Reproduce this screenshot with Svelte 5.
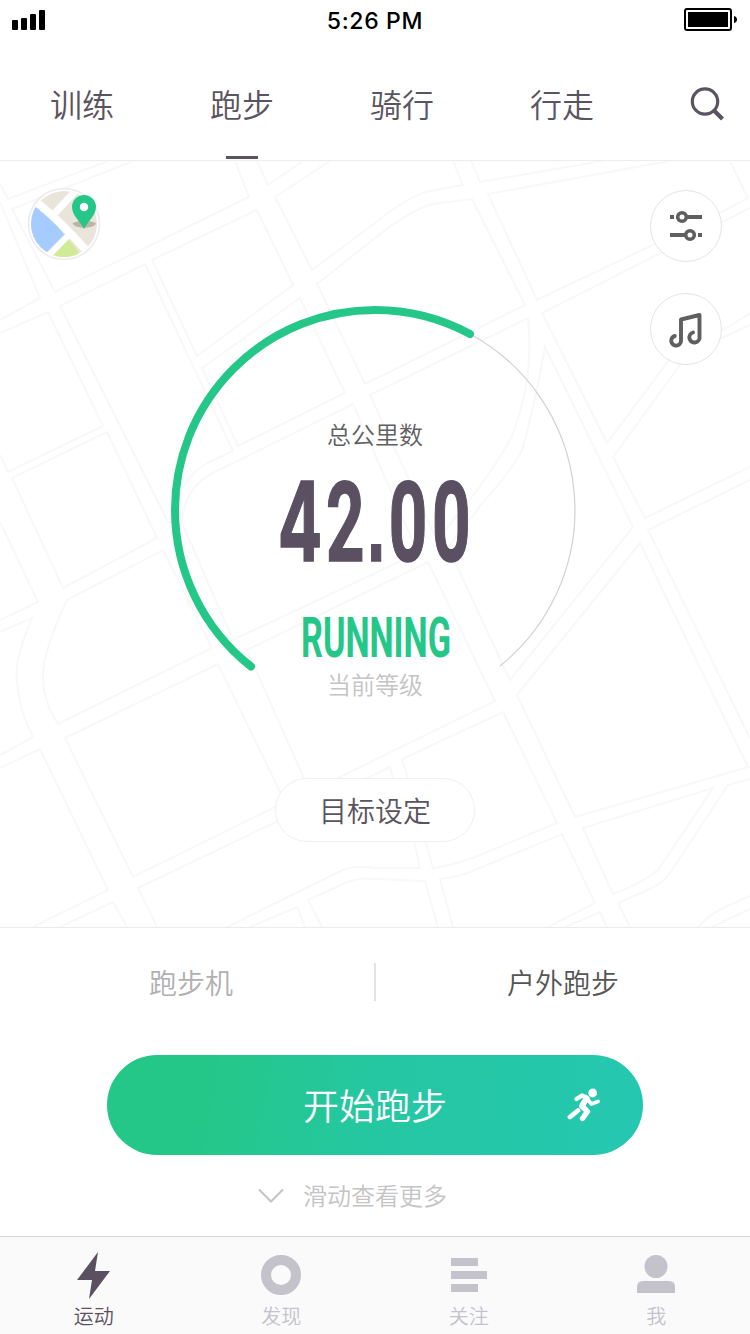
<script>
  const tabs = ['训练', '跑步', '骑行', '行走'];
  const activeTab = '跑步';

  // Outlines of the city blocks, in screen units
  const blocks = [
    'M0 184L8 199L108 161',
    'M133 161L12 209L55 292L249 197L235 161',
    'M0 202L40 298L0 320',
    'M0 333L48 312L103 426L8 472L0 455',
    'M60 306L145 264L233 451L207 463Q178 480 172 522L168 522Z',
    'M152 260L257 210L293 285L197 356Z',
    'M202 368L300 298L345 393L238 446Z',
    'M257 161L268 185L303 161',
    'M330 161L275 197L312 270L375 223Q408 196 430 191L463 185L453 161',
    'M317 284L375 238Q412 209 433 204L472 199L525 305L365 384Z',
    'M471 161L480 182L602 161',
    'M670 161L488 194L537 300L722 212L748 198L730 161',
    'M750 208L542 313L607 443L667 363Q684 344 723 330L750 313',
    'M750 325L700 348Q688 354 680 365L613 457L645 518L750 467',
    'M750 480L648 530L750 738',
    'M633 527L510 680L448 547L485 500Q512 470 522 450Q536 400 545 347Z',
    'M370 395L528 318Q534 378 514 430Q510 445 475 493L437 540Z',
    'M353 404L213 473Q184 488 182 523L233 640L418 553Z',
    'M247 650L428 562L495 701L340 777L310 792Z',
    'M163 550L212 648L58 724Q36 690 46 655Q52 632 67 600Z',
    'M12 478L107 432L157 538L63 588Z',
    'M0 522L38 602L0 620',
    'M0 632L32 618Q14 660 17 680Q18 708 33 737L0 755',
    'M0 768L40 749L108 890L33 927',
    'M65 738L218 664L285 802L133 877Z',
    'M60 927L113 902L127 927',
    'M157 927L138 888L280 820L405 800L420 868L375 868Q356 865 343 870L227 927',
    'M250 927L297 907L305 927',
    'M322 927L308 900L345 883Q360 877 375 879L425 881L438 927',
    'M453 927L440 879Q460 877 475 870L562 834L595 903L548 927',
    'M565 927L600 912L607 927',
    'M630 927L618 903L650 889Q663 883 670 873L728 785L750 779',
    'M698 927Q710 914 725 907L750 896',
    'M712 927L750 909',
    'M583 828L713 788L658 870Q640 884 613 894Z',
    'M575 817L517 695L640 543L748 767Z',
    'M503 712L557 823L475 857Q450 866 433 868L402 759Z',
    'M365 779L390 767L396 790'
  ];
</script>

<div class="screen">
  <header class="status">
    <svg class="signal" width="34" height="21" viewBox="0 0 34 21">
      <rect x="0" y="10" width="6" height="10" rx="1" />
      <rect x="9" y="8" width="6" height="12" rx="1" />
      <rect x="18" y="4" width="6" height="16" rx="1" />
      <rect x="27" y="0" width="6" height="20" rx="1" />
    </svg>
    <span class="time">5:26 PM</span>
    <svg class="battery" width="54" height="24" viewBox="0 0 54 24">
      <rect x="1" y="1" width="46" height="21" rx="2" fill="none" stroke="#000" stroke-width="2" />
      <rect x="4" y="4" width="40" height="15" />
      <path d="M50 8Q53 9 53 11.500Q53 14 50 15Z" />
    </svg>
  </header>

  <nav class="tabs">
    {#each tabs as tab}
      <div class="tab" class:active={tab === activeTab}>{tab}</div>
    {/each}
    <svg class="search" width="36" height="36" viewBox="0 0 36 36" fill="none" stroke="#5a5360">
      <circle cx="16" cy="15.500" r="12.700" stroke-width="3.200" />
      <path d="M24.500 24L33.500 33" stroke-width="4.200" />
    </svg>
  </nav>

  <main class="stage">
    <svg class="map" viewBox="0 161 750 766" width="750" height="766">
      <g fill="none" stroke="#f8f8f8" stroke-width="2">
        {#each blocks as d}<path {d} />{/each}
      </g>
    </svg>

    <div class="tools">
      <svg class="mapbtn" width="74" height="74" viewBox="27 187 74 74">
        <defs><clipPath id="disc"><circle cx="64" cy="224" r="33" /></clipPath></defs>
        <circle cx="64" cy="224" r="35.500" fill="#fff" stroke="#ebebeb" stroke-width="1.500" />
        <g clip-path="url(#disc)">
          <path d="M30 188H100V260H30Z" fill="#e9e5da" />
          <path d="M26 200L36 207Q52 218 64 234.500L46 253L22 262Z" fill="#a6ccff" />
          <path d="M68.500 239L80 254L72 262H46L52 256Z" fill="#d0eb96" />
          <path d="M32 199Q58 218 92 257" stroke="#fff" stroke-width="8" fill="none" />
          <path d="M80 186L55 213" stroke="#fff" stroke-width="7" />
          <path d="M70 234L46 258" stroke="#fff" stroke-width="6" />
        </g>
        <path d="M72.500 223Q84 218 96 223Q96 227 84 228Q73 227 72.500 223Z" fill="#bcb4a5" />
        <path d="M84 229C81 222 72 216 72 207A12 12 0 0 1 96 207C96 216 87 222 84 229Z" fill="#25c789" />
        <circle cx="84" cy="207" r="4.200" fill="#fff" />
      </svg>
      <div class="side">
        <div class="round">
          <svg width="36" height="36" viewBox="0 0 36 36" fill="none" stroke="#5f5f5f">
            <path d="M2 9H6M17 9H34M2 27H18M30 27H34" stroke-width="4" />
            <circle cx="14" cy="9" r="4.300" stroke-width="3.600" />
            <circle cx="22" cy="27" r="4.300" stroke-width="3.600" />
          </svg>
        </div>
        <div class="round">
          <svg width="36" height="38" viewBox="0 0 36 38" fill="none" stroke="#5f5f5f" stroke-width="3.900" stroke-linecap="round" stroke-linejoin="round">
            <path d="M6.800 26A4.900 4.900 0 1 0 13 31V9.500L31.500 5V26.500A5.100 5.100 0 1 1 25 22.500" />
          </svg>
        </div>
      </div>
    </div>

    <section class="gauge">
      <svg class="dial" viewBox="165 300 420 380" width="420" height="380" fill="none">
        <path d="M470 334A200 200 0 0 1 500 666" stroke="#d2d2d2" stroke-width="1.200" />
        <path d="M251 666.500A200 200 0 0 1 175 510A200 200 0 0 1 375 310A200 200 0 0 1 470 334" stroke="#25c789" stroke-width="8" stroke-linecap="round" />
      </svg>
      <div class="label">总公里数</div>
      <svg class="figure" viewBox="275 455 200 137" width="200" height="137">
        <text transform="translate(0 560.5) scale(.6 1)" y="0"><tspan class="four" x="500">4</tspan><tspan x="575.500">2</tspan><tspan class="dot" x="627">.</tspan><tspan x="680">0</tspan><tspan x="752">0</tspan></text>
      </svg>
      <svg class="level" viewBox="295 602 160 72" width="160" height="72">
        <text x="301" y="657" textLength="150" lengthAdjust="spacingAndGlyphs">RUNNING</text>
      </svg>
      <div class="caption">当前等级</div>
    </section>

    <button class="goal">目标设定</button>
  </main>

  <section class="start">
    <div class="modes">
      <span class="mode muted">跑步机</span>
      <span class="mode">户外跑步</span>
    </div>
    <button class="go">
      <span>开始跑步</span>
      <svg class="runner" width="34" height="34" viewBox="0 0 34 34" fill="none" stroke="#fff" stroke-linecap="round" stroke-linejoin="round">
        <circle cx="25.700" cy="5" r="4.400" fill="#fff" stroke="none" />
        <path d="M9.500 11L15 7.500L20.500 10L16 18" stroke-width="4.400" />
        <path d="M20 10.500L24.500 16L31 13.500" stroke-width="3.800" />
        <path d="M19 11L14.800 18L20.500 23.500L15.500 30.500" stroke-width="5.400" />
        <path d="M11 22.500L3 29" stroke-width="4.800" />
      </svg>
    </button>
    <div class="hint">
      <svg width="28" height="18" viewBox="0 0 28 18" fill="none" stroke="#c4c4c4" stroke-width="2"><path d="M2 3.500L14 15.500L26 3.500" /></svg>
      <span>滑动查看更多</span>
    </div>
  </section>

  <footer class="dock">
    <div class="item on">
      <svg width="40" height="50" viewBox="0 0 40 50"><path d="M24 2L3 30H18L15 49L36 21H21Z" /></svg>
      <span>运动</span>
    </div>
    <div class="item">
      <svg width="40" height="50" viewBox="0 0 40 50"><circle cx="20" cy="25" r="15" fill="none" stroke="#c4c3cb" stroke-width="10" /></svg>
      <span>发现</span>
    </div>
    <div class="item">
      <svg width="40" height="50" viewBox="0 0 40 50"><path d="M2 8H29V16H2ZM2 21H38V29H2ZM2 34H29V42H2Z" /></svg>
      <span>关注</span>
    </div>
    <div class="item">
      <svg width="40" height="50" viewBox="0 0 40 50"><circle cx="20" cy="16.500" r="11.500" /><path d="M1 43V37Q1 31 7 31H33Q39 31 39 37V43Z" /></svg>
      <span>我</span>
    </div>
  </footer>
</div>

<style>
  :global(body) { margin: 0; background: #fff; }
  .screen {
    width: 750px; height: 1334px; overflow: hidden;
    display: flex; flex-direction: column; background: #fff; color: #5a5360;
    font-family: "Noto Sans CJK SC", sans-serif; font-weight: 350;
  }
  button { font: inherit; color: inherit; margin: 0; padding: 0; box-sizing: border-box; }
  svg { display: block; flex: none; }

  .status {
    height: 40px; box-sizing: border-box; padding: 0 12px;
    display: grid; grid-template-columns: 1fr auto 1fr; align-items: center;
    color: #000;
  }
  .time { font: 500 23px/38px Inter, sans-serif; letter-spacing: .65px; padding-top: 2px; }
  .battery { justify-self: end; }

  .tabs {
    height: 121px; box-sizing: border-box; padding-left: 2px;
    border-bottom: 1px solid #ededed; display: flex;
  }
  .tab {
    width: 160px; height: 119px; display: flex; flex-direction: column; align-items: center;
    font-size: 32px; line-height: 48px; padding-top: 39px; box-sizing: border-box;
  }
  .tab.active::after { content: ""; width: 32px; height: 3px; margin-top: auto; background: #5a5360; }
  .search { margin: 46px 0 0 47px; }

  .stage {
    position: relative; height: 767px; box-sizing: border-box; flex: none;
    border-bottom: 1px solid #ebebeb; display: flex; flex-direction: column; align-items: center;
  }
  .map { position: absolute; inset: 0; }
  .tools {
    position: relative; align-self: stretch; height: 139px;
    display: flex; justify-content: space-between; padding: 26px 28px 0 27px; box-sizing: border-box;
  }
  .side { display: flex; flex-direction: column; gap: 31px; padding-top: 3px; }
  .round {
    width: 72px; height: 72px; flex: none; box-sizing: border-box; border: 1.500px solid #e4e4e4;
    border-radius: 50%; background: #fff; display: grid; place-items: center;
  }
  .gauge {
    position: relative; width: 420px; height: 478px;
    display: flex; flex-direction: column; align-items: center;
  }
  .dial { position: absolute; inset: 0; }
  .label { margin-top: 116px; font-size: 24px; line-height: 36px; color: #5f5f5f; }
  .figure { margin-top: 3px; }
  .figure text {
    font: 700 112px Roboto, sans-serif; text-anchor: middle;
    fill: #5a5062; stroke: #5a5062; stroke-width: 1.500px;
  }
  .figure .four { font: 700 110px Inter, sans-serif; }
  .figure .dot { font: 700 110px "Liberation Sans", sans-serif; }
  .level { margin-top: 10px; }
  .level text { font: 700 56px Roboto, sans-serif; fill: #25c789; }
  .caption { margin-top: -8px; font-size: 24px; line-height: 36px; color: #c4c4c4; }
  .goal {
    position: relative; width: 200px; height: 64px; border: 1.500px solid #f0f0f0; border-radius: 32px;
    background: #fff; font-size: 28px; line-height: 58px;
  }

  .start { height: 308px; flex: none; display: flex; flex-direction: column; align-items: center; }
  .modes { width: 750px; height: 127px; display: flex; padding-top: 35px; box-sizing: border-box; }
  .mode {
    flex: 0 0 374px; height: 38px; box-sizing: border-box; text-align: center;
    font-size: 28px; line-height: 38px; color: #555; padding-right: 0;
  }
  .mode.muted { flex-basis: 376px; color: #b0b0b0; border-right: 2px solid #e3e3e3; padding-left: 8px; }
  .go {
    width: 536px; height: 100px; border: 0; border-radius: 50px; color: #fff;
    background: linear-gradient(100deg, #25c789 20%, #25c7a2 50%, #25c7b1 100%);
    display: grid; grid-template-columns: 1fr auto 1fr; align-items: center;
    font-size: 36px; line-height: 54px;
  }
  .go span { grid-column: 2; margin-top: -2px; }
  .runner { margin-left: 120px; }
  .hint {
    margin-top: 22px; display: flex; align-items: center; gap: 18px;
    font-size: 24px; line-height: 36px; color: #c4c4c4; margin-right: 46px;
  }

  .dock {
    height: 98px; box-sizing: border-box; border-top: 1px solid #d8d8dc; background: #fafafa;
    display: flex; flex: none;
  }
  .item {
    flex: 1; display: flex; flex-direction: column; align-items: center;
    padding-top: 13px; font-size: 20px; line-height: 31px; color: #c4c3cb; fill: #c4c3cb;
  }
  .item.on { color: #5a5062; fill: #5a5062; }
</style>
